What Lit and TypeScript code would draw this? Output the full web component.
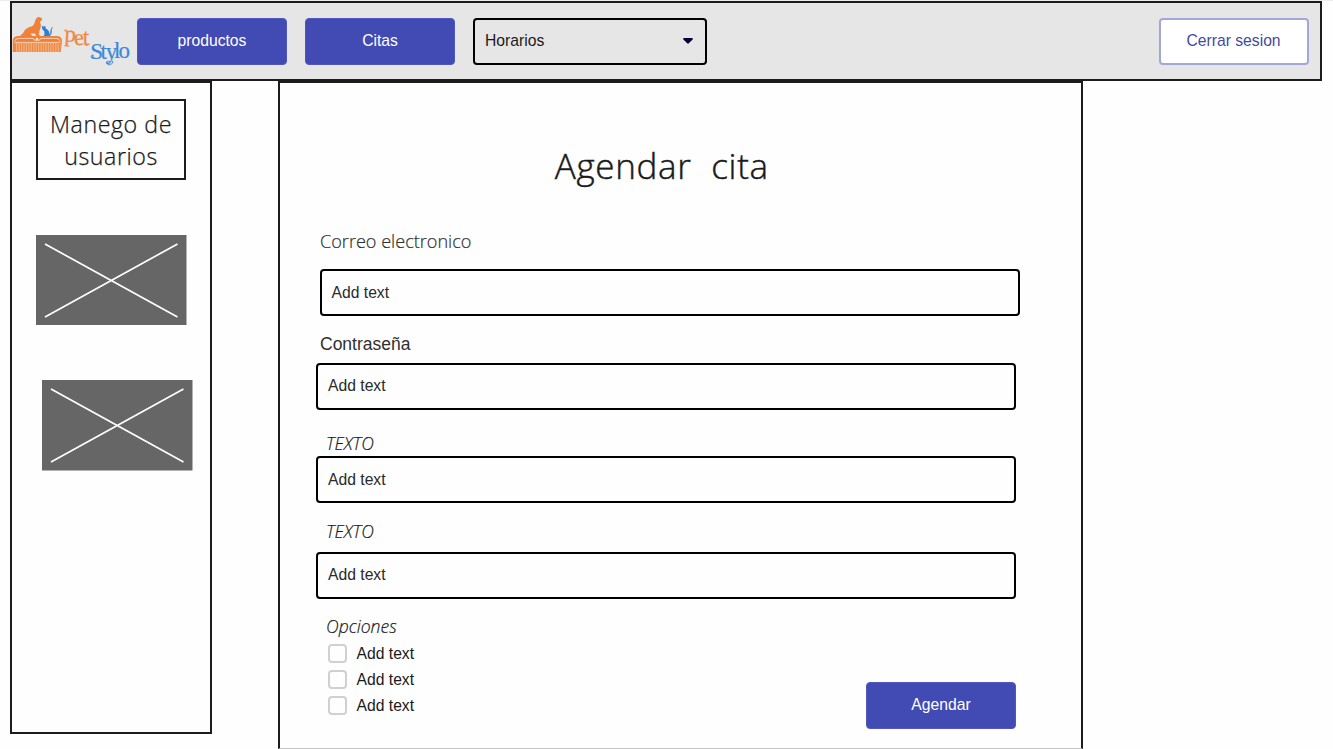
import { LitElement, html, css, svg } from "lit";
import { customElement } from "lit/decorators.js";

@customElement("pet-logo")
class PetLogo extends LitElement {
  static styles = css`
    :host { display: block; width: 120px; height: 56px; flex: none; }
    svg { display: block; }
    .script { font-family: "Liberation Serif", serif; }
  `;
  render() {
    const teeth = Array.from({ length: 19 }, (_, i) => 15.4 + i * 2.45);
    return html`<svg width="120" height="56" viewBox="12 12 120 56">
      <path fill="#f08138" d="M20 36.3C21 34 23 34.3 23.7 32C25 28.8 28.5 27.2 32.2 26.3C34.7 24.5 34.7 21.5 35.8 19.2C36.8 17.2 38.5 16.5 40 17.2L42.2 18.6L41.8 20.5L39.8 21.4C41.2 24.3 41.4 27.3 39.8 29.6L38.8 34.2L40.3 36.3H36.2L35 33.5L31.5 33.4L30.8 34L32.4 36.3Z"/>
      <path fill="#2c7fd4" d="M41.9 25.6L43.5 26.8L45.3 25.8L45.7 28.6C48.3 29.8 49.7 32 49.6 34.7C51.1 33.4 49.5 30.5 51.8 27.4L53 26.8L51.7 29.6C52.2 32.5 51.3 35.4 49.4 36.3H43.2L44.5 34.7L44.2 31.2L42.2 29Z"/>
      <path fill="#f08138" d="M12.8 52V40.2C13.2 37.2 15.6 36 19 36.1H56.5C60 36 61.8 37.6 62 40.5L60.9 52H57.5V43.4H14.9V52Z"/>
      <path fill="#f5ad78" d="M15 43.5H60.5V52H15Z"/>
      ${teeth.map((x) => svg`<path stroke="#ec8745" stroke-width="1.15" d=${`M${x} 43V52`}/>`)}
      <path fill="none" stroke="#fbe3d2" stroke-width=".8" d="M14.4 41.4Q15 38.4 19.5 38.4H32Q34.5 38.4 34.5 40.2H39.5Q39.7 38.4 42 38.4H56Q59.8 38.4 60.3 41.5M14.5 42.4H60"/>
      <circle cx="37" cy="39" r="1.3" fill="#fbe3d2"/>
      <g class="script" fill="#ee8a49" stroke="#ee8a49" stroke-width=".3">
        <text x="64.2 74.4 82.8" y="41.2 45.4 45" rotate="3 -6 0" font-size="23">pet</text>
        <path fill="none" stroke-width="1" d="M64.2 30.8q2-2.6 3.2.4M84.5 44.8q3 1.5 5-.9"/>
      </g>
      <g class="script" fill="#3c89d9" stroke="#3c89d9" stroke-width=".2">
        <text x="90.2 100.6 105.8 114.1 118.5" y="59 58.6 58.6 58.2 58.2" font-size="23">Stylo</text>
        <path fill="none" stroke-width=".9" d="M94 58.2q-3.4.4-2.9-1.8t2.8-.3M110 61.8q-3.2-1.8-3 1.1t3.3 1.8 2.5-4"/>
      </g>
    </svg>`;
  }
}

@customElement("image-box")
class ImageBox extends LitElement {
  static styles = css`
    :host { display: block; width: 150.5px; height: 90.5px; }
    svg { display: block; }
  `;
  render() {
    return html`<svg width="150.5" height="90.5" viewBox="0 0 150.5 90.5">
      <rect width="150.5" height="90.5" fill="#666"/>
      <path d="M9 9L141.5 82M9 82L141.5 9" stroke="#fff" stroke-width="1.7"/>
    </svg>`;
  }
}

@customElement("app-root")
class AppRoot extends LitElement {
  static styles = css`
    :host {
      display: block; width: 1333px; height: 749px; overflow: hidden;
      box-sizing: border-box; background: #fefefe; border-top: 1px solid #ececec;
      font: 15.7px/20px "Liberation Sans", Arial, sans-serif; color: #1a1a1a;
    }
    * { box-sizing: border-box; }
    .bar {
      display: flex; align-items: flex-start; width: 1312px; height: 80px; margin-left: 10px;
      border: 2px solid #1c1c1c; background: #e6e6e6; padding: 14.5px 11.5px 0 0;
    }
    pet-logo { margin: -5.5px 5px 0 0; }
    .btn {
      width: 150px; height: 47px; border-radius: 4px; border: 1px solid #5058bd; background: #424ab3;
      color: #fff; display: flex; align-items: center; justify-content: center; flex: none;
    }
    .nav { margin-right: 18px; }
    .select {
      width: 234px; height: 47px; border: 2px solid #000; border-radius: 4px;
      display: flex; align-items: center; justify-content: space-between; padding: 0 12px 0 10px;
    }
    .logout { margin-left: auto; background: #fff; border: 2px solid #a3a6dc; color: #424a9f; }
    .main { display: flex; align-items: flex-start; margin-left: 10px; }
    .side { width: 202px; height: 653px; border: 2px solid #1c1c1c; padding: 16px 0 0 24px; }
    .users {
      width: 150px; height: 81px; border: 2px solid #1c1c1c; text-align: center; padding-top: 7px;
      font: 300 23.2px/32px "Open Sans", sans-serif; letter-spacing: .55px; -webkit-text-stroke: .25px #1a1a1a;
    }
    .first { margin-top: 54.5px; }
    .second { margin: 55px 0 0 6px; }
    .card {
      width: 805px; height: 668px; margin-left: 66px; border: 2px solid #1c1c1c;
      border-bottom: 1px solid #c4c4c4; padding: 0 65px 0 36px;
    }
    h1 {
      margin: 57.5px 8.5px 0 0; height: 50px; text-align: center; white-space: pre;
      font: 300 35px/50px "Open Sans", sans-serif; letter-spacing: .7px; -webkit-text-stroke: .45px #1a1a1a;
    }
    .label { height: 24px; line-height: 24px; margin-left: 10px; font-family: "Open Sans", sans-serif; }
    .italic { font-style: italic; font-weight: 300; font-size: 17.5px; -webkit-text-stroke: .2px #1a1a1a; }
    .email { margin: 38.5px 0 0 4px; font-size: 18.1px; font-weight: 300; color: #303030; -webkit-text-stroke: .2px #303030; }
    .password { margin: 16px 0 0 4px; font: 17.5px/24px "Liberation Sans", sans-serif; color: #303030; }
    .field {
      width: 700px; height: 47px; border: 2px solid #000; border-radius: 4px;
      display: flex; align-items: center; padding-left: 10px; color: #2a2a2a;
    }
    .field-email { margin: 16px 0 0 4px; padding-left: 9.5px; }
    .field-password { margin-top: 6.5px; }
    .text-one { margin-top: 21.5px; }
    .field-one { margin-top: 1px; }
    .text-two { margin-top: 16px; }
    .field-two { margin-top: 8.5px; }
    .choices { margin-top: 15px; margin-bottom: 3px; font-size: 17.6px; }
    .foot { display: flex; justify-content: space-between; align-items: flex-start; }
    .option { display: flex; align-items: center; height: 26px; gap: 9.5px; margin-left: 11.5px; }
    .check { width: 19.5px; height: 19.5px; border: 2px solid #d0d0d0; border-radius: 4px; }
    .send { margin-top: 83px; }
  `;
  render() {
    return html`
      <header class="bar">
        <pet-logo></pet-logo>
        <div class="btn nav">productos</div>
        <div class="btn nav">Citas</div>
        <div class="select"><span>Horarios</span>
          <svg width="10" height="6" viewBox="0 0 10 6"><path d="M1 0H9Q10.4.5 9.4 1.7L5.8 5.3Q5 6 4.2 5.3L.6 1.7Q-.4.5 1 0Z" fill="#050038"/></svg>
        </div>
        <div class="btn logout">Cerrar sesion</div>
      </header>
      <div class="main">
        <aside class="side">
          <div class="users">Manego de<br>usuarios</div>
          <image-box class="first"></image-box>
          <image-box class="second"></image-box>
        </aside>
        <section class="card">
          <h1>Agendar  cita</h1>
          <div class="label email">Correo electronico</div>
          <div class="field field-email">Add text</div>
          <div class="label password">Contraseña</div>
          <div class="field field-password">Add text</div>
          <div class="label italic text-one">TEXTO</div>
          <div class="field field-one">Add text</div>
          <div class="label italic text-two">TEXTO</div>
          <div class="field field-two">Add text</div>
          <div class="foot">
            <div>
              <div class="label italic choices">Opciones</div>
              ${[0, 1, 2].map(() => html`<div class="option"><span class="check"></span><span>Add text</span></div>`)}
            </div>
            <div class="btn send">Agendar</div>
          </div>
        </section>
      </div>`;
  }
}
